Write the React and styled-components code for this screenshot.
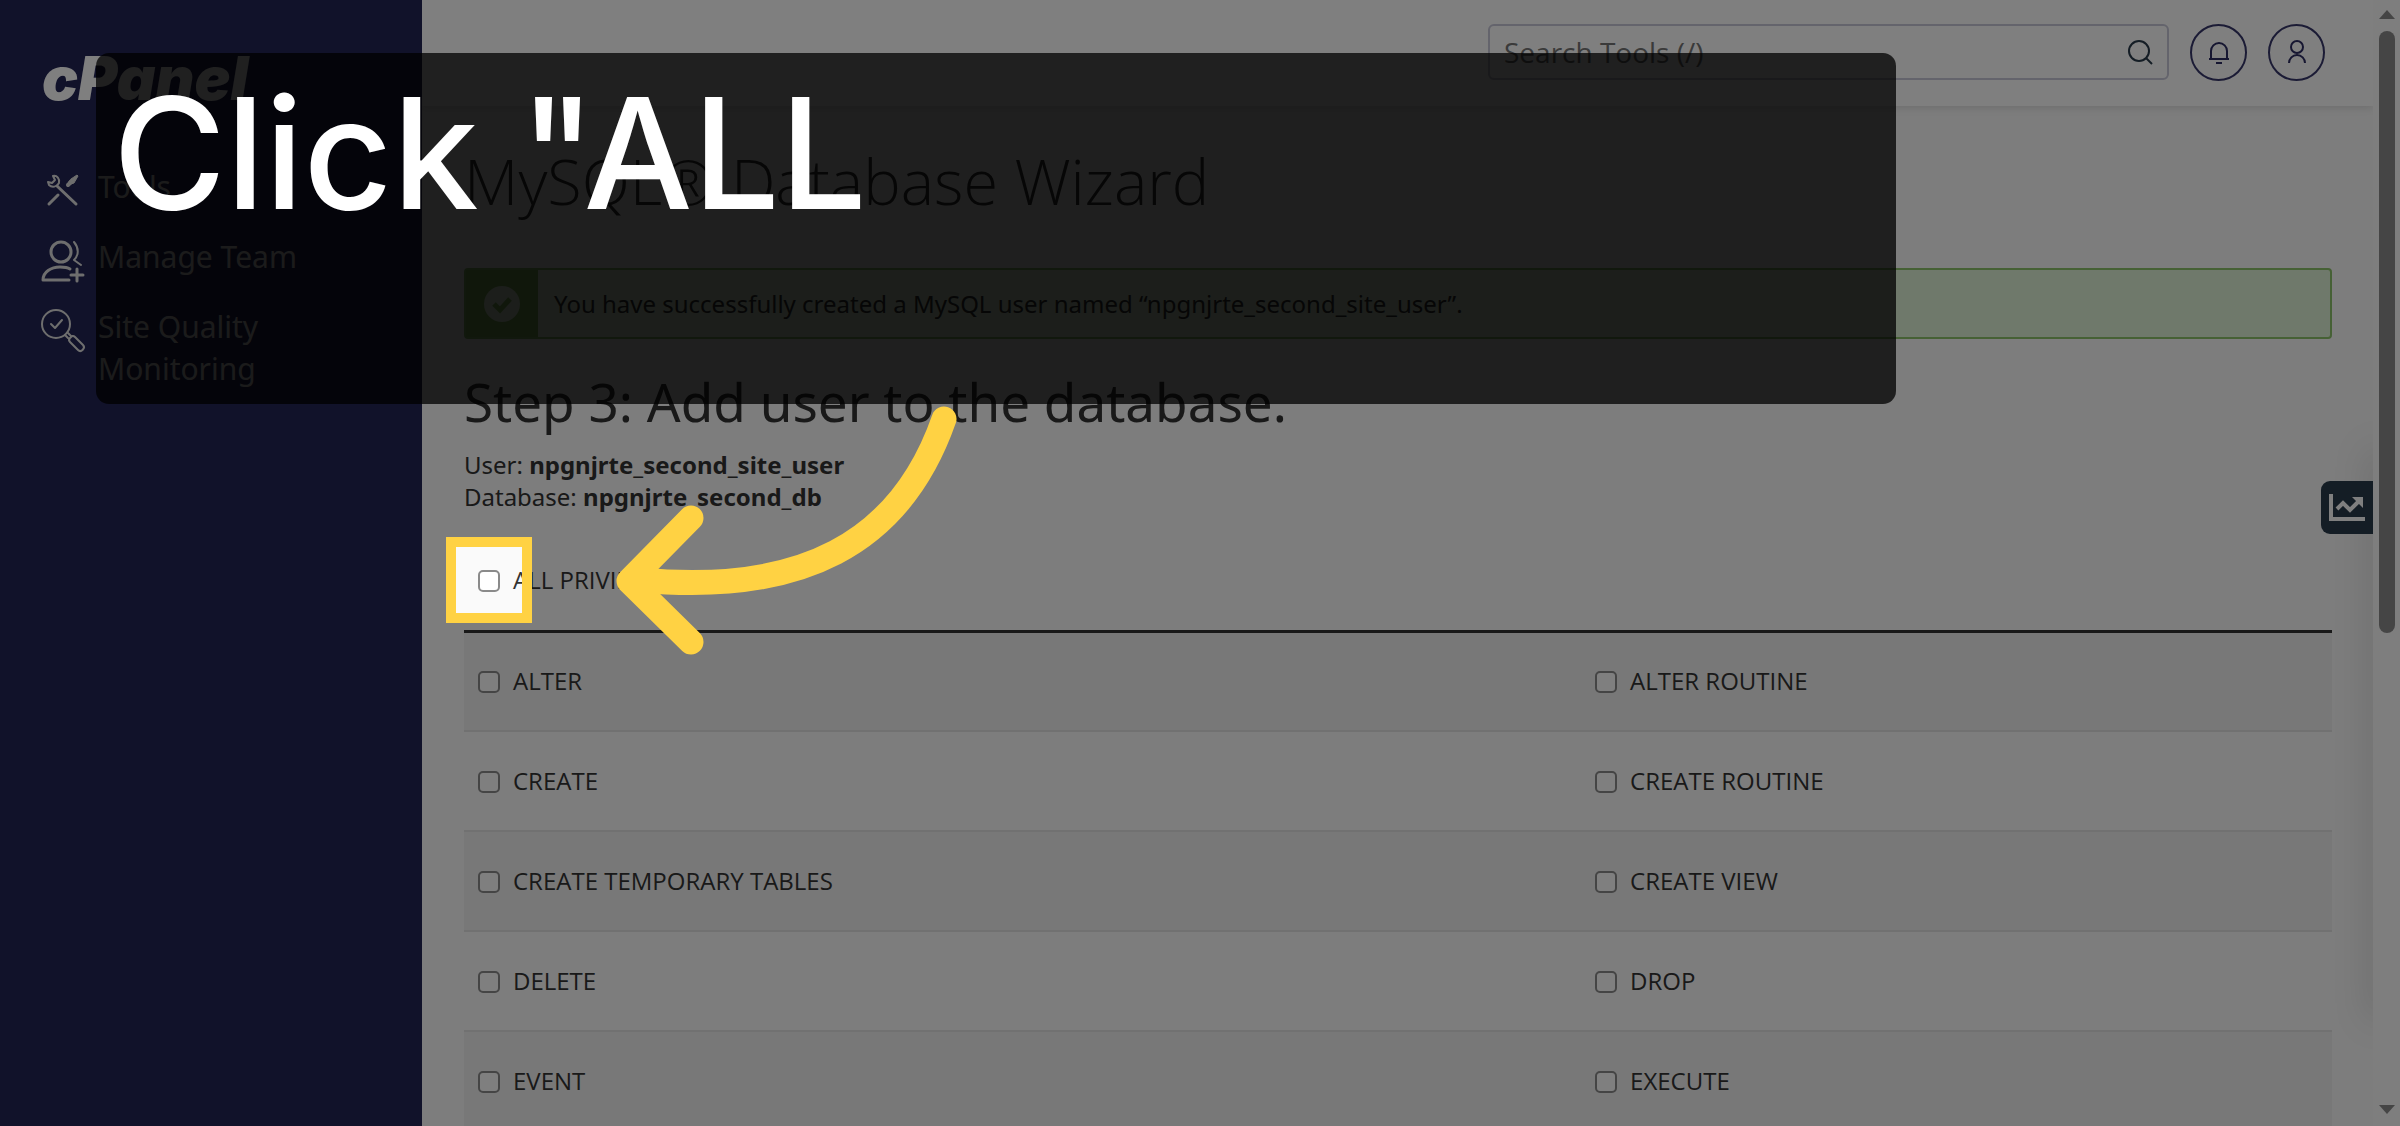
import React from "react";
import styled, { createGlobalStyle } from "styled-components";

const privileges = [
  ["ALTER", "ALTER ROUTINE"],
  ["CREATE", "CREATE ROUTINE"],
  ["CREATE TEMPORARY TABLES", "CREATE VIEW"],
  ["DELETE", "DROP"],
  ["EVENT", "EXECUTE"],
];

const GlobalStyle = createGlobalStyle`
  * {
    box-sizing: border-box;
  }
  body {
    margin: 0;
    overflow: hidden;
    font-family: "Open Sans", "Noto Sans", sans-serif;
    font-size: 24px;
    line-height: 32px;
    color: #333;
    background: #fafafa;
  }
`;

const Screen = styled.div`
  position: relative;
  display: grid;
  grid-template-columns: 422px minmax(0, 1fr) 27px;
  height: 100vh;
  overflow: hidden;
`;

const Sidebar = styled.aside`
  padding: 42px 42px 0;
  background: #222454;
`;

const Logo = styled.a`
  display: block;
  font-family: Inter, sans-serif;
  font-size: 60px;
  font-style: italic;
  font-weight: 900;
  line-height: 72px;
  color: #fff;
  text-decoration: none;
`;

const Nav = styled.nav`
  display: flex;
  flex-direction: column;
  padding-top: 38px;
`;

const NavLink = styled.a`
  display: flex;
  align-items: flex-start;
  gap: 14px;
  padding: 14px 0;
  font-family: "Noto Sans", sans-serif;
  font-size: 30px;
  line-height: 42px;
  color: #ddd;
  text-decoration: none;

  svg {
    flex: none;
    width: 42px;
    height: 42px;
    margin: 4px 0 -4px;
    overflow: visible;
  }
`;

const Content = styled.div`
  position: relative;
  overflow: hidden;
  background: #fafafa;
`;

const Header = styled.header`
  display: flex;
  justify-content: flex-end;
  align-items: center;
  gap: 21px;
  height: 106px;
  padding: 0 48px 2px 0;
  background: #fff;
  box-shadow: 0 2px 8px rgba(0, 0, 0, 0.12);
`;

const Search = styled.label`
  display: flex;
  align-items: center;
  width: 681px;
  height: 56px;
  padding: 0 14px;
  border: 2px solid #c8c8d8;
  border-radius: 6px;

  input {
    flex: 1;
    min-width: 0;
    padding: 0;
    border: 0;
    outline: 0;
    background: none;
    font: inherit;
    font-size: 28px;
  }
  input::placeholder {
    color: #757575;
    opacity: 1;
  }
`;

const RoundButton = styled.button`
  display: grid;
  place-items: center;
  width: 57px;
  height: 57px;
  padding: 0;
  border: 2px solid #37376a;
  border-radius: 50%;
  background: none;
  color: #2d2d62;
`;

const Main = styled.main`
  padding: 40px 41px 0 42px;
`;

const Title = styled.h1`
  margin: 0 0 52px;
  font-size: 63px;
  font-weight: 300;
  line-height: 70px;
`;

const Alert = styled.div`
  display: flex;
  height: 71px;
  border: 2px solid #8cc26a;
  border-radius: 4px;
  background: #def3d6;
`;

const AlertIcon = styled.span`
  display: grid;
  place-items: center;
  width: 72px;
  background: #82b85c;
`;

const AlertText = styled.p`
  margin: 0;
  padding: 18px 16px;
  font-family: "Noto Sans", sans-serif;
`;

const StepTitle = styled.h2`
  margin: 33px 0 17px;
  font-family: "Noto Sans", sans-serif;
  font-size: 53px;
  font-weight: 400;
  line-height: 60px;
`;

const Summary = styled.p`
  margin: 0 0 18px;
  font-family: "Noto Sans", sans-serif;
`;

const Table = styled.table`
  width: 100%;
  border-collapse: collapse;
  table-layout: fixed;

  td,
  th {
    height: 100px;
    padding: 0 14px;
    text-align: left;
    font-weight: 400;
  }
  th {
    border-bottom: 3px solid #333;
  }
  td {
    border-bottom: 2px solid #e2e2e2;
  }
  tbody tr:nth-child(odd) {
    background: #f1f1f1;
  }
`;

const Check = styled.label`
  display: flex;
  align-items: center;
  gap: 13px;

  input {
    appearance: none;
    width: 22px;
    height: 22px;
    margin: 2px 0 0;
    border: 2px solid #8a8a8a;
    border-radius: 5px;
    background: #fff;
  }
`;

// shadow cast by the closed drawer just past the right edge
const Drawer = styled.div`
  position: absolute;
  top: 450px;
  right: -10px;
  width: 10px;
  height: 570px;
  box-shadow: 0 0 36px rgba(0, 0, 0, 0.28);
`;

const StatsButton = styled.button`
  position: absolute;
  top: 481px;
  right: 0;
  display: grid;
  place-items: center;
  width: 52px;
  height: 53px;
  padding: 0;
  border: 0;
  border-radius: 9px 0 0 9px;
  background: #293a4a;
  color: #fff;
`;

const Scrollbar = styled.div`
  display: flex;
  flex-direction: column;
  align-items: center;
  justify-content: space-between;
  padding: 10px 0 12px;
  background: #fcfcfc;
`;

const Thumb = styled.div`
  width: 16px;
  height: 602px;
  margin: 12px 0 auto;
  border-radius: 8px;
  background: #8a8a8a;
`;

const Triangle = styled.span`
  border: 8px solid transparent;
  border-width: ${(p) => (p.$down ? "9px 8px 0" : "0 8px 9px")};
  border-${(p) => (p.$down ? "top" : "bottom")}-color: #8a8a8a;
`;

const Guide = styled.div`
  position: absolute;
  inset: 0;
  overflow: hidden;
  pointer-events: none;
`;

const Spotlight = styled.div`
  position: absolute;
  top: 537px;
  left: 446px;
  width: 86px;
  height: 86px;
  border: 10px solid #ffd243;
  box-shadow: 0 0 0 4000px rgba(0, 0, 0, 0.5);
`;

const Arrow = styled.svg`
  position: absolute;
  top: 400px;
  left: 610px;
  width: 350px;
  height: 260px;
`;

const Caption = styled.div`
  position: absolute;
  top: 53px;
  left: 4%;
  width: 75%;
  min-height: 351px;
  padding: 20px 17px;
  border-radius: 13px;
  background: rgba(0, 0, 0, 0.75);
  font-family: Inter, sans-serif;
  font-size: 154px;
  font-weight: 500;
  line-height: 160px;
  color: #fff;
`;

const ToolsIcon = () => (
  <svg viewBox="0 0 42 42" fill="none" stroke="currentColor" strokeWidth="3" strokeLinecap="round">
    <path d="M15 16 34 34M7 34 16 25" />
    <path d="M11 6c4-1 7 3 6 7-2 4-7 5-10 2l-1-3 4 1 3-3z" strokeWidth="2" strokeLinejoin="round" />
    <path d="M26 15l3-3" strokeWidth="4" />
    <path d="M29 9l6-4 1 1-4 7-3 1-2-2z" fill="currentColor" strokeWidth="1" />
  </svg>
);

const TeamIcon = () => (
  <svg viewBox="0 0 42 42" fill="none" stroke="currentColor" strokeWidth="3" strokeLinecap="round" strokeLinejoin="round">
    <circle cx="19" cy="12" r="10" />
    <path d="M27 40H1c0-8 8-13 17-13 4 0 7 0 10 2" />
    <path d="M32 2c5 6 5 13 0 18l7 5" strokeWidth="2" />
    <path d="M35 29v12M29 35h12" />
  </svg>
);

const QualityIcon = () => (
  <svg viewBox="0 0 42 42" fill="none" stroke="currentColor" strokeWidth="2" strokeLinecap="round" strokeLinejoin="round">
    <circle cx="14" cy="14" r="14" />
    <path d="M9 14l4 4 7-8" />
    <path d="M23 25l3 3M26 23l3 3M28 28c-2 2-1 3 0 4l8 8c3 3 8-2 5-5l-8-8c-2-2-3-1-5 1z" />
  </svg>
);

const Checkbox = ({ children }) => (
  <Check>
    <input type="checkbox" />
    {children}
  </Check>
);

const App = () => {
  return (
    <Screen>
      <GlobalStyle />
      <Sidebar>
        <Logo href="#">cPanel</Logo>
        <Nav>
          <NavLink href="#tools">
            <ToolsIcon />
            Tools
          </NavLink>
          <NavLink href="#team">
            <TeamIcon />
            Manage Team
          </NavLink>
          <NavLink href="#quality">
            <QualityIcon />
            Site Quality Monitoring
          </NavLink>
        </Nav>
      </Sidebar>
      <Content>
        <Header>
          <Search>
            <input type="text" placeholder="Search Tools (/)" aria-label="Search Tools" />
            <svg width="26" height="26" viewBox="0 0 26 26" fill="none" stroke="#293a4a" strokeWidth="2">
              <circle cx="12" cy="12" r="10" />
              <path d="M19 19l6 6" />
            </svg>
          </Search>
          <RoundButton aria-label="Notifications">
            <svg width="24" height="24" viewBox="0 0 24 24" fill="none" stroke="currentColor" strokeWidth="2">
              <path d="M2 19h20M4 19v-8a8 8 0 0 1 16 0v8M9 23h6" />
            </svg>
          </RoundButton>
          <RoundButton aria-label="Account">
            <svg width="24" height="24" viewBox="0 0 24 24" fill="none" stroke="currentColor" strokeWidth="2">
              <circle cx="12" cy="7" r="6" />
              <path d="M4 23a8 8 0 0 1 16 0" />
            </svg>
          </RoundButton>
        </Header>
        <Main>
          <Title>MySQL® Database Wizard</Title>
          <Alert role="status">
            <AlertIcon>
              <svg width="36" height="36" viewBox="0 0 36 36">
                <circle cx="18" cy="18" r="18" fill="#def3d6" />
                <path d="M10 18l6 6 10-11" fill="none" stroke="#82b85c" strokeWidth="5" />
              </svg>
            </AlertIcon>
            <AlertText>
              You have successfully created a MySQL user named “npgnjrte_second_site_user”.
            </AlertText>
          </Alert>
          <StepTitle>Step 3: Add user to the database.</StepTitle>
          <Summary>
            User: <strong>npgnjrte_second_site_user</strong>
            <br />
            Database: <strong>npgnjrte_second_db</strong>
          </Summary>
          <Table>
            <colgroup>
              <col width="59.8%" />
              <col />
            </colgroup>
            <thead>
              <tr>
                <th colSpan={2}>
                  <Checkbox>ALL PRIVILEGES</Checkbox>
                </th>
              </tr>
            </thead>
            <tbody>
              {privileges.map(([left, right]) => (
                <tr key={left}>
                  <td>
                    <Checkbox>{left}</Checkbox>
                  </td>
                  <td>
                    <Checkbox>{right}</Checkbox>
                  </td>
                </tr>
              ))}
            </tbody>
          </Table>
        </Main>
        <Drawer />
        <StatsButton aria-label="Statistics">
          <svg width="36" height="28" viewBox="0 0 36 28" fill="none" stroke="currentColor" strokeWidth="4">
            <path d="M2 0v25h34" />
            <path d="M8 15l6-6 7 7 9-9" />
            <path d="M23 3h11v11z" fill="currentColor" stroke="none" />
          </svg>
        </StatsButton>
      </Content>
      <Scrollbar>
        <Triangle />
        <Thumb />
        <Triangle $down />
      </Scrollbar>
      <Guide>
        <Spotlight />
        <Arrow viewBox="610 400 350 260" fill="none" stroke="#ffd243" strokeWidth="25" strokeLinecap="round" strokeLinejoin="round">
          <path d="M944 419C900 545 800 595 640 580" />
          <path d="M691 518 629 581 691 642" />
        </Arrow>
        <Caption>Click "ALL</Caption>
      </Guide>
    </Screen>
  );
};

export default App;
